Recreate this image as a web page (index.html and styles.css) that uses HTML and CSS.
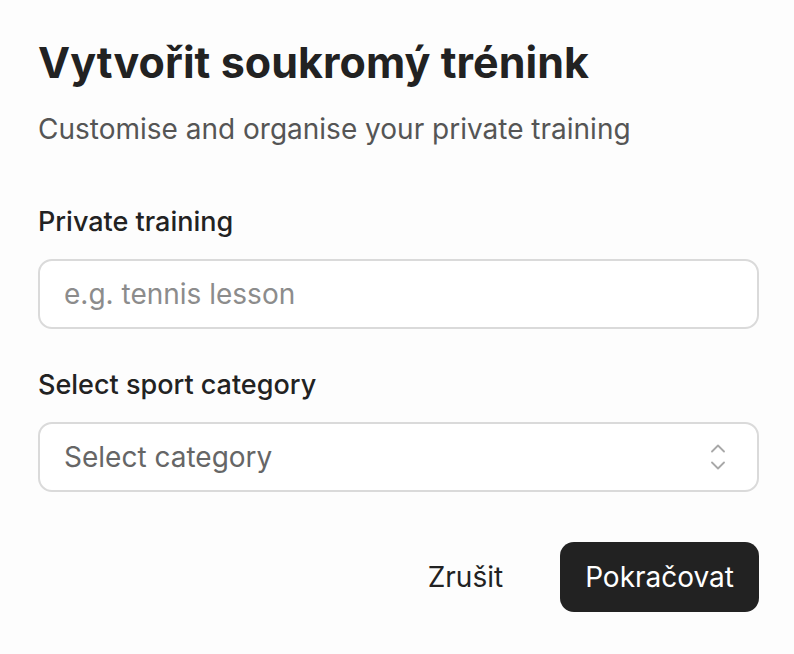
FILE: index.html
```html
<!DOCTYPE html>
<html lang="cs">
<head>
  <meta charset="UTF-8">
  <meta name="viewport" content="width=device-width, initial-scale=1.0">
  <title>Vytvořit soukromý trénink</title>
  <link rel="stylesheet" href="styles.css">
</head>
<body>

  <div class="dialog">
    <h1 class="title">Vytvořit soukromý trénink</h1>
    <p class="subtitle">Customise and organise your private training</p>

    <!-- Název tréninku -->
    <div class="field">
      <label class="label" for="name">Private training</label>
      <input class="input" id="name" type="text" placeholder="e.g. tennis lesson">
    </div>

    <!-- Kategorie -->
    <div class="field">
      <label class="label" for="category">Select sport category</label>
      <div class="select" id="category">
        <span class="select-value">Select category</span>
        <svg class="chevrons" width="14" height="26" viewBox="0 0 14 26" fill="none" stroke="#a8a8a8" stroke-width="1.8" stroke-linecap="round" stroke-linejoin="round">
          <polyline points="1,7.5 7,1.5 13,7.5"></polyline>
          <polyline points="1,18.5 7,24.5 13,18.5"></polyline>
        </svg>
      </div>
    </div>

    <div class="actions">
      <button class="button cancel">Zrušit</button>
      <button class="button primary">Pokračovat</button>
    </div>
  </div>

</body>
</html>
```

FILE: styles.css
```css
* {
  margin: 0;
  padding: 0;
  box-sizing: border-box;
}

body {
  font-family: Inter, 'Noto Sans', sans-serif;
  background-color: #fdfdfd;
  color: #222;
}

.dialog {
  width: 794px;
  padding: 36px 35px 0 38px;
}

.title {
  font-size: 43px;
  font-weight: 700;
  line-height: 52px;
  letter-spacing: 0.05px;
  color: #222;
}

.subtitle {
  margin-top: 24px;
  font-size: 28px;
  line-height: 34px;
  color: #555;
}

.field {
  margin-top: 59px;
  display: flex;
  flex-direction: column;
}

.field + .field {
  margin-top: 39px;
}

.label {
  font-size: 27px;
  font-weight: 500;
  line-height: 34px;
  color: #222;
  margin-bottom: 20px;
}

.input,
.select {
  width: 721px;
  height: 70px;
  border: 2px solid #dadada;
  border-radius: 14px;
  background-color: #fff;
  padding: 0 24px;
  font-family: inherit;
  font-size: 28px;
  color: #222;
}

.input::placeholder {
  color: #8c8c8c;
}

.select {
  display: flex;
  align-items: center;
  justify-content: space-between;
}

.select-value {
  color: #666;
}

.chevrons {
  margin-right: 8px;
}

.actions {
  margin-top: 50px;
  display: flex;
  justify-content: flex-end;
  align-items: center;
  gap: 32px;
  width: 721px;
}

.button {
  font-family: inherit;
  font-size: 28px;
  font-weight: 400;
  border: none;
  border-radius: 14px;
  height: 70px;
  padding: 0 25px;
  cursor: pointer;
}

.cancel {
  background: none;
  color: #222;
}

.primary {
  background-color: #222;
  color: #fff;
}
```
